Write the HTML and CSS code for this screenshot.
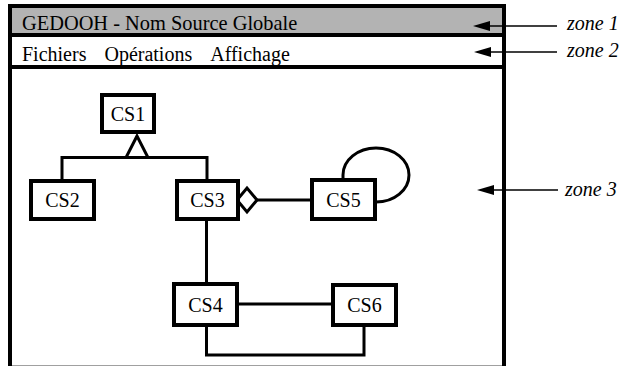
FILE: index.html
```html
<!DOCTYPE html>
<html lang="fr">
<head>
  <meta charset="UTF-8">
  <title>GEDOOH - Nom Source Globale</title>
  <link rel="stylesheet" href="styles.css">
</head>
<body>

  <div class="page">
    <div class="window">
      <div class="title-bar">GEDOOH - Nom Source Globale</div>
      <div class="menu-bar">
        <span>Fichiers</span>
        <span>Opérations</span>
        <span>Affichage</span>
      </div>
      <div class="canvas">
        <svg class="diagram" width="490" height="296" viewBox="12 69 490 296">
          <g class="links">
            <polyline points="62,179 62,157.5 207,157.5 207,179" />
            <polygon class="white" points="137,136 126,157.5 148,157.5" />
            <line x1="206.5" y1="221" x2="206.5" y2="282" />
            <line x1="257" y1="200" x2="310" y2="200" />
            <polygon class="white" points="237,200 247,188 257,200 247,212" />
            <path d="M343 180 L343 175 A33 27 0 1 1 376 202" />
            <line x1="239" y1="304" x2="331" y2="304" />
            <polyline points="206.5,327 206.5,355 364,355 364,327" />
          </g>
          <g class="nodes">
            <rect x="102" y="95" width="52" height="37" />
            <rect x="31" y="181" width="63" height="38" />
            <rect x="177" y="181" width="61" height="38" />
            <rect x="312" y="180" width="63" height="39" />
            <rect x="174" y="284" width="63" height="41" />
            <rect x="333" y="285" width="63" height="40" />
          </g>
          <g class="labels">
            <text x="128" y="121">CS1</text>
            <text x="62.5" y="207">CS2</text>
            <text x="207.5" y="207">CS3</text>
            <text x="343.5" y="207">CS5</text>
            <text x="205.5" y="312">CS4</text>
            <text x="364.5" y="312">CS6</text>
          </g>
        </svg>
      </div>
    </div>

    <!-- légendes des zones, par-dessus la fenêtre -->
    <svg class="notes" width="624" height="366">
      <g class="arrow">
        <line x1="486" y1="26" x2="557" y2="26" />
        <polygon points="473,26 490,21 490,31" />
        <line x1="487" y1="52" x2="557" y2="52" />
        <polygon points="474,52 491,47 491,57" />
        <line x1="490" y1="190" x2="558" y2="190" />
        <polygon points="477,190 494,185 494,195" />
      </g>
      <text x="567" y="30">zone 1</text>
      <text x="567" y="57">zone 2</text>
      <text x="565" y="196">zone 3</text>
    </svg>
  </div>

</body>
</html>
```

FILE: styles.css
```css
body {
  margin: 0;
  background-color: #fff;
  font-family: 'Liberation Serif', 'Times New Roman', serif;
  color: #000;
}
.page {
  position: relative;
  width: 624px;
  height: 366px;
  overflow: hidden;
}
.window {
  margin: 4px 0 0 8px;
  width: 490px;
  border: 4px solid #000;
  border-bottom: none;
}
.title-bar {
  height: 20px;
  padding: 5px 0 0 10px;
  line-height: 20px;
  font-size: 20.4px;
  background-color: #b3b3b3;
  border-bottom: 4px solid #000;
}
.menu-bar {
  display: flex;
  gap: 18px;
  height: 21px;
  padding: 7px 0 0 10px;
  line-height: 21px;
  font-size: 20px;
  border-bottom: 4px solid #000;
}
.canvas {
  height: 296px;
  border-bottom: 1px solid #a0a0a0;
}
.diagram {
  display: block;
}
.links {
  fill: none;
  stroke: #000;
  stroke-width: 3;
}
.links .white {
  fill: #fff;
}
.nodes rect {
  fill: #fff;
  stroke: #000;
  stroke-width: 4;
}
.labels text {
  font-family: 'Liberation Serif', 'Times New Roman', serif;
  font-size: 20px;
  text-anchor: middle;
}
.notes {
  position: absolute;
  top: 0;
  left: 0;
  pointer-events: none;
}
.notes .arrow line {
  stroke: #000;
  stroke-width: 1.5;
}
.notes .arrow polygon {
  fill: #000;
}
.notes text {
  font-family: 'Liberation Serif', 'Times New Roman', serif;
  font-style: italic;
  font-size: 20px;
}
```
